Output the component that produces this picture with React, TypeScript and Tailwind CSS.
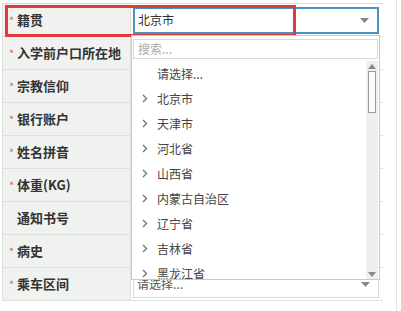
const rows = [
  { label: "籍贯", req: true },
  { label: "入学前户口所在地", req: true },
  { label: "宗教信仰", req: true },
  { label: "银行账户", req: true },
  { label: "姓名拼音", req: true },
  { label: "体重(KG)", req: true },
  { label: "通知书号", req: false },
  { label: "病史", req: true },
  { label: "乘车区间", req: true },
];

const options = ["北京市", "天津市", "河北省", "山西省", "内蒙古自治区", "辽宁省", "吉林省", "黑龙江省"];

const Caret = () => (
  <svg width="9" height="5" viewBox="0 0 9 5" className="shrink-0">
    <path d="M0 0h9L4.5 5z" fill="#888" />
  </svg>
);

const Chevron = () => (
  <svg width="6" height="9" viewBox="0 0 6 9" className="shrink-0">
    <path d="M1 1l3.5 3.5L1 8" fill="none" stroke="#777" strokeWidth="1.4" />
  </svg>
);

const App = () => {
  return (
    <div className="relative w-[401px] h-[311px] bg-white overflow-hidden font-['Noto_Sans_CJK_SC','Noto_Sans',sans-serif]">
      <div className="flex h-full">
        <div className="w-[383px] pt-[3px] pl-[2px]">
          <div className="border-l border-t border-[#dde1dd]">
            {rows.map((r, i) => (
              <div key={r.label} className="flex h-[33px] border-b border-[#dde1dd]">
                <div className="w-[128px] bg-[#eff2ef] border-r border-[#dde1dd] flex items-center pl-[6px]">
                  <span className="w-[8px] text-[11px] text-[#d46a6a] leading-none">{r.req ? "*" : ""}</span>
                  <span className="text-[13px] font-bold text-[#333]">{r.label}</span>
                </div>
                <div className="flex-1 flex items-center pl-[2px] pr-[4px]">
                  {i === 0 && (
                    <div className="w-full h-[27px] border-2 border-[#4a93bd] flex items-center justify-between pl-[3px] pr-[8px]">
                      <span className="text-[12px] text-[#333]">北京市</span>
                      <Caret />
                    </div>
                  )}
                  {i === 8 && (
                    <div className="w-full h-[27px] border border-[#d6dbd6] flex items-center justify-between pl-[3px] pr-[8px]">
                      <span className="text-[12px] text-[#555]">请选择...</span>
                      <Caret />
                    </div>
                  )}
                </div>
              </div>
            ))}
          </div>
        </div>
        <div className="w-[13px]" />
        <div className="border-l border-[#e6e6e6]" />
      </div>

      {/* highlight annotation */}
      <div className="absolute left-[5px] top-[5px] w-[291px] h-[32px] border-[3px] border-[#e3393c]" />

      {/* dropdown */}
      <div className="absolute left-[131px] top-[35px] w-[249px] h-[245px] bg-white border border-[#c9c9c9] flex flex-col">
        <div className="mt-[3px] mx-[1px] h-[20px] border border-[#d9d9d9] flex items-center px-[4px]">
          <span className="text-[12px] text-[#aaa]">搜索...</span>
        </div>
        <div className="mt-[2px] flex flex-1 min-h-0 overflow-hidden">
          <div className="flex-1 flex flex-col">
            <div className="h-[25px] shrink-0 flex items-center pl-[25px] text-[12px] text-[#444]">请选择...</div>
            {options.map((o) => (
              <div key={o} className="h-[25px] shrink-0 flex items-center pl-[10px] gap-[9px] text-[12px] text-[#444]">
                <Chevron />
                <span>{o}</span>
              </div>
            ))}
          </div>
          <div className="w-[12px] mr-[1px] bg-[#efefef] flex flex-col items-center pt-[3px] pb-[2px]">
            <svg width="8" height="5" viewBox="0 0 8 5">
              <path d="M0 5h8L4 0z" fill="#888" />
            </svg>
            <div className="mt-[2px] w-[8px] h-[42px] bg-[#fafafa] border border-[#9a9a9a]" />
            <div className="flex-1" />
            <svg width="8" height="5" viewBox="0 0 8 5">
              <path d="M0 0h8L4 5z" fill="#888" />
            </svg>
          </div>
        </div>
      </div>
    </div>
  );
};

export default App;
